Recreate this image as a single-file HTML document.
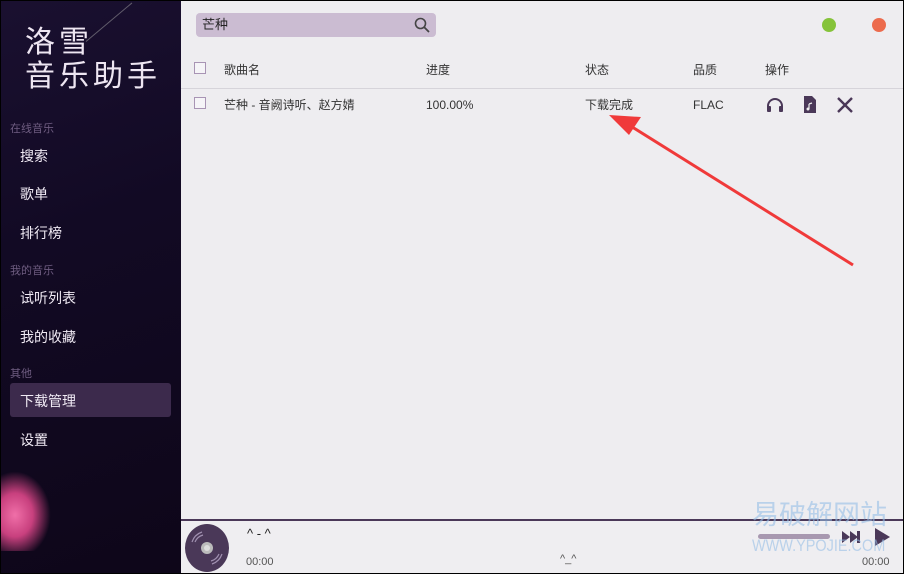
<!DOCTYPE html>
<html><head><meta charset="utf-8"><style>
*{margin:0;padding:0;box-sizing:border-box}
html,body{width:904px;height:574px;overflow:hidden}
body{font-family:"Liberation Sans","Noto Sans CJK SC",sans-serif;background:#000;position:relative}
#side{position:absolute;left:1px;top:1px;width:180px;height:572px;background:linear-gradient(160deg,#1a1030 0%,#120a24 40%,#0e0619 100%);color:#e8e0ee;overflow:hidden}
#main{position:absolute;left:181px;top:1px;width:722px;height:518px;background:#eeedf0}
.logo{position:absolute;left:24px;font-size:30px;letter-spacing:4px;line-height:34px;color:#eee6f2;font-family:"WenQuanYi Zen Hei","Noto Sans CJK SC",sans-serif;white-space:nowrap}
.cat{position:absolute;left:9px;font-size:11px;color:#6e5c80;line-height:14px}
.item{position:absolute;left:19px;font-size:14px;color:#f0eaf4;line-height:18px}
.sel{position:absolute;left:9px;top:382px;width:161px;height:34px;background:#3c2a4c;border-radius:3px}
.search{position:absolute;left:15px;top:12px;width:240px;height:24px;background:#cbbcd2;border-radius:4px;font-size:13px;line-height:24px;padding:0 6px;color:#222}
.t{position:absolute;font-size:12px;color:#333;line-height:14px;white-space:nowrap}
.cb{position:absolute;width:12px;height:12px;border:1px solid #a894b4;background:#f5f4f7}
#player{position:absolute;left:181px;top:519px;width:722px;height:54px;background:#efeef1;border-top:2px solid #4a3858;overflow:hidden}
</style></head><body>
<div id="side">
<div class="logo" style="top:21px">洛雪</div>
<div class="logo" style="top:55px">音乐助手</div>
<div style="position:absolute;left:85px;top:40px;width:60px;height:1px;background:#aaa;transform-origin:left;transform:rotate(-40deg);opacity:.5"></div>
<div class="cat" style="top:121px">在线音乐</div>
<div class="item" style="top:146px">搜索</div>
<div class="item" style="top:184px">歌单</div>
<div class="item" style="top:223px">排行榜</div>
<div class="cat" style="top:263px">我的音乐</div>
<div class="item" style="top:288px">试听列表</div>
<div class="item" style="top:327px">我的收藏</div>
<div class="cat" style="top:366px">其他</div>
<div class="sel"></div>
<div class="item" style="top:391px">下载管理</div>
<div class="item" style="top:430px">设置</div>
<div style="position:absolute;left:-10px;top:470px;width:60px;height:80px;background:radial-gradient(ellipse at 40% 55%,#f06fa8 0%,#c8407e 35%,rgba(80,20,60,0) 70%)"></div>
</div>
<div id="main">
<div class="search">芒种<svg style="position:absolute;right:6px;top:4px" width="16" height="16" viewBox="0 0 16 16"><circle cx="6.5" cy="6.5" r="5" fill="none" stroke="#444" stroke-width="1.6"/><path d="M10 10l5 5" stroke="#444" stroke-width="1.8"/></svg></div>
<div style="position:absolute;left:641px;top:17px;width:14px;height:14px;border-radius:50%;background:#85c33a"></div>
<div style="position:absolute;left:691px;top:17px;width:14px;height:14px;border-radius:50%;background:#ec6b4d"></div>
<div class="cb" style="left:13px;top:61px"></div>
<div class="t" style="left:43px;top:62px">歌曲名</div>
<div class="t" style="left:245px;top:62px">进度</div>
<div class="t" style="left:404px;top:62px">状态</div>
<div class="t" style="left:512px;top:62px">品质</div>
<div class="t" style="left:584px;top:62px">操作</div>
<div style="position:absolute;left:0;top:87px;width:722px;height:1px;background:#d6d4da"></div>
<div class="cb" style="left:13px;top:96px"></div>
<div class="t" style="left:43px;top:97px">芒种 - 音阙诗听、赵方婧</div>
<div class="t" style="left:245px;top:97px">100.00%</div>
<div class="t" style="left:404px;top:97px">下载完成</div>
<div class="t" style="left:512px;top:97px">FLAC</div>
<svg style="position:absolute;left:585px;top:96px" width="18" height="16" viewBox="0 0 18 16"><path d="M2 14V9a7 7 0 0 1 14 0v5" fill="none" stroke="#4a3858" stroke-width="2"/><rect x="1" y="9" width="4" height="6" rx="1" fill="#4a3858"/><rect x="13" y="9" width="4" height="6" rx="1" fill="#4a3858"/></svg>
<svg style="position:absolute;left:623px;top:95px" width="12" height="17" viewBox="0 0 12 17"><path d="M0 0h8l4 4v13H0z" fill="#4a3858"/><path d="M5 8v5M5 8l3-1" stroke="#eee" stroke-width="1.2" fill="none"/><circle cx="4" cy="13" r="1.5" fill="#eee"/></svg>
<svg style="position:absolute;left:656px;top:96px" width="16" height="16" viewBox="0 0 16 16"><path d="M1 1l14 14M15 1L1 15" stroke="#4a3858" stroke-width="2.4"/></svg>
<svg style="position:absolute;left:420px;top:110px" width="260" height="160" viewBox="0 0 260 160"><path d="M252 154L28 14" stroke="#f03a3a" stroke-width="3"/><path d="M8 4L40 6L28 24Z" fill="#f03a3a"/></svg>
</div>
<div id="player">
<svg style="position:absolute;left:3px;top:3px" width="46" height="48" viewBox="0 0 46 48"><ellipse cx="23" cy="24" rx="22" ry="24" fill="#4a3858"/><circle cx="23" cy="24" r="6" fill="#bbb"/><circle cx="23" cy="24" r="3" fill="#ddd"/><path d="M8 18a16 16 0 0 1 10-10M38 30a16 16 0 0 1-10 10M11 18a12 12 0 0 1 8-7M35 30a12 12 0 0 1-8 7" stroke="#a090b0" stroke-width="1.2" fill="none"/></svg>
<div style="position:absolute;left:66px;top:5px;font-size:13px;color:#222;line-height:15px">^ - ^</div>
<div style="position:absolute;left:65px;top:35px;font-size:11px;color:#555;line-height:13px">00:00</div>
<div style="position:absolute;left:379px;top:32px;font-size:11px;color:#555;line-height:13px">^_^</div>
<div style="position:absolute;left:681px;top:35px;font-size:11px;color:#555;line-height:13px">00:00</div>
<div style="position:absolute;left:577px;top:13px;width:72px;height:5px;border-radius:3px;background:#a898b0"></div>
<svg style="position:absolute;left:660px;top:8px" width="20" height="16" viewBox="0 0 20 16"><path d="M1 2l8 6-8 6zM9 2l8 6-8 6z" fill="#4a3858"/><rect x="16" y="2" width="3" height="12" fill="#4a3858"/></svg>
<svg style="position:absolute;left:692px;top:6px" width="18" height="20" viewBox="0 0 18 20"><path d="M2 1l15 9-15 9z" fill="#4a3858"/></svg>
</div>
<div style="position:absolute;left:752px;top:499px;font-size:27px;line-height:32px;color:rgba(150,190,230,.6);letter-spacing:0;white-space:nowrap">易破解网站</div>
<div style="position:absolute;left:752px;top:536px;font-size:17px;line-height:20px;color:rgba(150,190,230,.6);white-space:nowrap;transform:scaleX(.85);transform-origin:left">WWW.YPOJIE.COM</div>
</body></html>
